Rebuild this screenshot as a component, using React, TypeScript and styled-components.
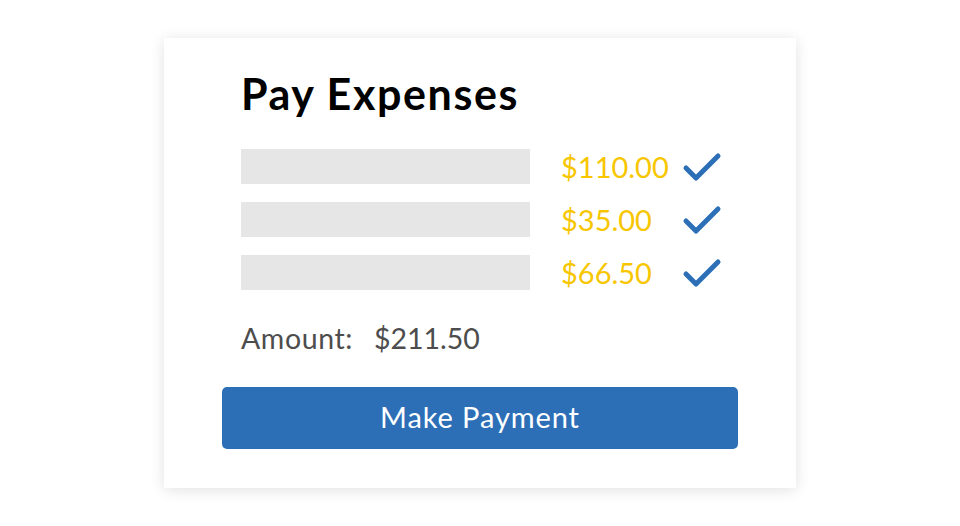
import React from "react";
import styled, { createGlobalStyle } from "styled-components";

const GlobalStyle = createGlobalStyle`
  html, body {
    margin: 0;
    padding: 0;
    background: #ffffff;
  }
  body {
    font-family: Lato, "Noto Sans", "Liberation Sans", sans-serif;
  }
`;

const Page = styled.div`
  width: 960px;
  height: 526px;
  display: flex;
  justify-content: center;
  padding-top: 38px;
  box-sizing: border-box;
`;

const Card = styled.div`
  width: 632px;
  height: 450px;
  background: #fff;
  box-shadow: 0 2px 14px rgba(0, 0, 0, 0.12);
  box-sizing: border-box;
  padding: 32px 58px 0 58px;
  display: flex;
  flex-direction: column;
`;

const Title = styled.h1`
  margin: 0 0 0 19px;
  font-size: 43px;
  font-weight: 700;
  color: #000;
  line-height: 48px;
  letter-spacing: 1.6px;
`;

const List = styled.div`
  margin: 31px 0 0 19px;
  display: flex;
  flex-direction: column;
  gap: 18px;
`;

const Row = styled.div`
  display: flex;
  align-items: center;
  height: 35px;
`;

const Bar = styled.div`
  width: 289px;
  height: 35px;
  background: #e6e6e6;
`;

const Price = styled.span`
  width: 121px;
  margin-left: 31px;
  font-size: 29px;
  color: #f7c600;
  line-height: 35px;
`;

const Check = () => (
  <svg width="40" height="32" viewBox="0 0 40 32" fill="none">
    <path
      d="M4 17 L14 27 L36 5"
      stroke="#2c6fb7"
      strokeWidth="5"
      strokeLinecap="round"
      strokeLinejoin="round"
    />
  </svg>
);

const Total = styled.div`
  margin: 31px 0 0 19px;
  display: flex;
  gap: 21px;
  font-size: 28.5px;
  color: #4d4d4d;
  line-height: 34px;
`;

const Label = styled.span`
  letter-spacing: 0.6px;
`;

const Button = styled.button`
  margin-top: 32px;
  width: 516px;
  height: 62px;
  border: none;
  border-radius: 5px;
  background: #2c6fb7;
  color: #fff;
  font-family: inherit;
  font-size: 29px;
  letter-spacing: 0.9px;
  padding: 0 0 4px;
  cursor: pointer;
`;

const rows = ["$110.00", "$35.00", "$66.50"];

export default function App() {
  return (
    <>
      <GlobalStyle />
      <Page>
        <Card>
          <Title>Pay Expenses</Title>
          <List>
            {rows.map((p) => (
              <Row key={p}>
                <Bar />
                <Price>{p}</Price>
                <Check />
              </Row>
            ))}
          </List>
          <Total>
            <Label>Amount:</Label>
            <span>$211.50</span>
          </Total>
          <Button>Make Payment</Button>
        </Card>
      </Page>
    </>
  );
}
